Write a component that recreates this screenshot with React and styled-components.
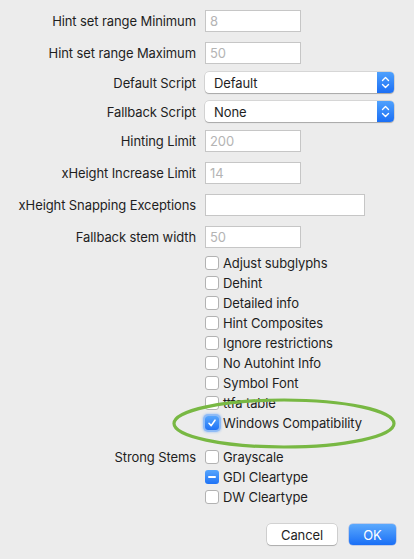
import React from "react";
import styled, { createGlobalStyle } from "styled-components";

const Global = createGlobalStyle`
  html, body { margin: 0; padding: 0; background: #ececec; }
  body { font-family: Inter, "Liberation Sans", Arial, sans-serif; font-size: 13px; letter-spacing: -0.1px; color: #1e1e1e; }
`;

const Window = styled.div`
  position: relative;
  width: 414px;
  height: 559px;
  background: #ececec;
  box-sizing: border-box;
  padding-top: 10px;
  overflow: hidden;
`;

const Row = styled.div`
  display: grid;
  grid-template-columns: 196px 1fr;
  column-gap: 9px;
  align-items: center;
  height: ${(p) => p.$h}px;
  margin-bottom: ${(p) => p.$gap || 0}px;
`;

const Label = styled.div`
  text-align: right;
  white-space: nowrap;
  font-size: 13px;
  color: #1e1e1e;
`;

const TextField = styled.div`
  box-sizing: border-box;
  width: ${(p) => p.$w}px;
  height: 22px;
  background: #fff;
  border: 1px solid #c6c6c6;
  color: #b4b4b4;
  font-size: 13px;
  padding-left: 4px;
  display: flex;
  align-items: center;
`;

const Select = styled.div`
  box-sizing: border-box;
  width: 189px;
  height: 21px;
  display: flex;
  align-items: stretch;
  border-radius: 4px;
  background: #fff;
  box-shadow: 0 0 0 0.5px rgba(0, 0, 0, 0.18), 0 1px 1px rgba(0, 0, 0, 0.22);
  overflow: hidden;
`;

const SelectText = styled.div`
  flex: 1;
  padding-left: 9px;
  display: flex;
  align-items: center;
  color: #1e1e1e;
`;

const Stepper = styled.div`
  width: 17px;
  background: linear-gradient(#4fa1fd, #1b6ff5);
  display: flex;
  align-items: center;
  justify-content: center;
`;

const CheckList = styled.div`
  display: flex;
  flex-direction: column;
`;

const CheckRow = styled.label`
  display: flex;
  align-items: center;
  height: 20px;
  gap: 4px;
  white-space: nowrap;
`;

const Box = styled.span`
  box-sizing: border-box;
  width: 14px;
  height: 14px;
  border-radius: 3px;
  display: flex;
  align-items: center;
  justify-content: center;
  background: ${(p) => (p.$on ? "linear-gradient(#57a6fd, #1f73f6)" : "#fff")};
  border: ${(p) => (p.$on ? "none" : "1px solid #b2b2b2")};
  box-shadow: ${(p) =>
    p.$focus ? "0 0 0 2px rgba(110, 170, 250, 0.6), 0 0 2px 3px rgba(110, 170, 250, 0.35)" : "none"};
`;

const StemsRow = styled.div`
  display: grid;
  grid-template-columns: 196px 1fr;
  column-gap: 9px;
  margin-top: 14px;
`;

const StemsLabel = styled(Label)`
  height: 20px;
  line-height: 20px;
`;

const Buttons = styled.div`
  display: flex;
  justify-content: flex-end;
  gap: 12px;
  padding-right: 18px;
  margin-top: 17px;
`;

const Button = styled.div`
  box-sizing: border-box;
  height: 21px;
  width: ${(p) => p.$w}px;
  border-radius: 4px;
  display: flex;
  align-items: center;
  justify-content: center;
  font-size: 13px;
  color: ${(p) => (p.$primary ? "#fff" : "#1e1e1e")};
  background: ${(p) => (p.$primary ? "linear-gradient(#5ba9fd, #1a6ff6)" : "#fff")};
  box-shadow: ${(p) =>
    p.$primary
      ? "0 0 0 0.5px rgba(0, 60, 200, 0.35)"
      : "0 0 0 0.5px rgba(0, 0, 0, 0.22), 0 1px 1px rgba(0, 0, 0, 0.18)"};
`;

const Highlight = styled.svg`
  position: absolute;
  left: 172px;
  top: 398px;
  pointer-events: none;
`;

const Chevrons = () => (
  <svg width="9" height="13" viewBox="0 0 9 13">
    <path d="M1.5 4.5 L4.5 1.5 L7.5 4.5" fill="none" stroke="#fff" strokeWidth="1.4" strokeLinecap="round" strokeLinejoin="round" />
    <path d="M1.5 8.5 L4.5 11.5 L7.5 8.5" fill="none" stroke="#fff" strokeWidth="1.4" strokeLinecap="round" strokeLinejoin="round" />
  </svg>
);

const Check = ({ state }) => (
  <Box $on={state === "checked" || state === "mixed"} $focus={state === "checked"}>
    {state === "checked" && (
      <svg width="10" height="10" viewBox="0 0 10 10">
        <path d="M2 5.3 L4.2 7.6 L8 2.2" fill="none" stroke="#fff" strokeWidth="1.6" strokeLinecap="round" strokeLinejoin="round" />
      </svg>
    )}
    {state === "mixed" && (
      <svg width="10" height="10" viewBox="0 0 10 10">
        <path d="M2 5 H8" stroke="#fff" strokeWidth="2" strokeLinecap="round" />
      </svg>
    )}
  </Box>
);

const fields = [
  { label: "Hint set range Minimum", kind: "text", value: "8", w: 96, h: 22, gap: 10 },
  { label: "Hint set range Maximum", kind: "text", value: "50", w: 96, h: 22, gap: 8 },
  { label: "Default Script", kind: "select", value: "Default", h: 21, gap: 8 },
  { label: "Fallback Script", kind: "select", value: "None", h: 21, gap: 8 },
  { label: "Hinting Limit", kind: "text", value: "200", w: 96, h: 22, gap: 10 },
  { label: "xHeight Increase Limit", kind: "text", value: "14", w: 96, h: 22, gap: 10 },
  { label: "xHeight Snapping Exceptions", kind: "text", value: "", w: 160, h: 22, gap: 10 },
  { label: "Fallback stem width", kind: "text", value: "50", w: 96, h: 22, gap: 5 },
];

const options = [
  ["Adjust subglyphs"],
  ["Dehint"],
  ["Detailed info"],
  ["Hint Composites"],
  ["Ignore restrictions"],
  ["No Autohint Info"],
  ["Symbol Font"],
  ["ttfa table"],
  ["Windows Compatibility", "checked"],
];

const stems = [["Grayscale"], ["GDI Cleartype", "mixed"], ["DW Cleartype"]];

export default function App() {
  return (
    <>
      <Global />
      <Window>
        {fields.map((f) => (
          <Row key={f.label} $h={f.h} $gap={f.gap}>
            <Label>{f.label}</Label>
            {f.kind === "text" ? (
              <TextField $w={f.w}>{f.value}</TextField>
            ) : (
              <Select>
                <SelectText>{f.value}</SelectText>
                <Stepper>
                  <Chevrons />
                </Stepper>
              </Select>
            )}
          </Row>
        ))}
        <Row $h={180}>
          <span />
          <CheckList>
            {options.map(([t, s]) => (
              <CheckRow key={t}>
                <Check state={s} />
                {t}
              </CheckRow>
            ))}
          </CheckList>
        </Row>
        <StemsRow>
          <StemsLabel>Strong Stems</StemsLabel>
          <CheckList>
            {stems.map(([t, s]) => (
              <CheckRow key={t}>
                <Check state={s} />
                {t}
              </CheckRow>
            ))}
          </CheckList>
        </StemsRow>
        <Buttons>
          <Button $w={70}>Cancel</Button>
          <Button $w={47} $primary>
            OK
          </Button>
        </Buttons>
        <Highlight width="226" height="52" viewBox="0 0 226 52">
          <ellipse cx="112" cy="25.5" rx="110" ry="23.5" fill="none" stroke="#78b843" strokeWidth="3.2" />
        </Highlight>
      </Window>
    </>
  );
}
